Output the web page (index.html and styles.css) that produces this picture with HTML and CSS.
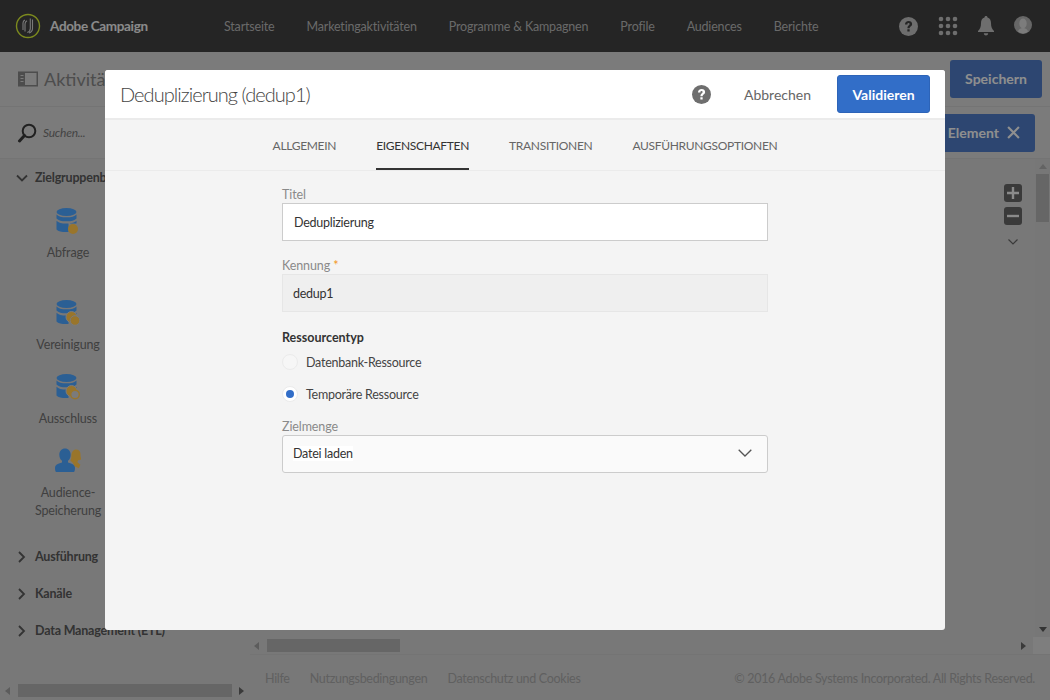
FILE: index.html
```html
<!DOCTYPE html>
<html lang="de">
<head>
<meta charset="utf-8">
<title>Deduplizierung</title>
<link rel="stylesheet" href="styles.css">
</head>
<body>
<div class="app">
  <header class="topbar">
    <div class="brand">
      <svg class="brand-logo" width="26" height="26" viewBox="0 0 26 26" fill="none"><circle cx="13" cy="13" r="11.500" stroke="#cfe632" stroke-width="1.400"/><path d="M8 17V10c0-1.500.8-2.500 2-3M10 18.500V11c0-1.500.7-2.500 2-3.200M12.300 19.500c2-.6 3-1.800 3-4V5.500M14 20c2.300-.8 3.500-2.200 3.500-4.500V6.500" stroke="#ccc" stroke-width="1.100"/></svg>
      <span class="brand-name">Adobe Campaign</span>
    </div>
    <nav class="nav">
      <a>Startseite</a><a>Marketingaktivitäten</a><a>Programme &amp; Kampagnen</a><a>Profile</a><a>Audiences</a><a>Berichte</a>
    </nav>
    <div class="top-icons">
      <svg width="19" height="19" viewBox="0 0 20 20"><circle cx="10" cy="10" r="10" fill="#b7b7b7"/><path d="M6.300 7.800c0-2.300 1.600-3.700 3.800-3.700s3.700 1.300 3.700 3.200c0 2.600-2.600 2.500-2.600 4.600H8.900c0-3.100 2.300-3 2.300-4.500 0-.7-.4-1.100-1.100-1.100-.8 0-1.300.5-1.300 1.500zM8.800 12.800h2.400v2.500H8.800z" fill="#3e3e3e"/></svg>
      <svg width="20" height="20" viewBox="0 0 20 20" fill="#b7b7b7"><circle cx="3" cy="3" r="2.300"/><circle cx="10" cy="3" r="2.300"/><circle cx="17" cy="3" r="2.300"/><circle cx="3" cy="10" r="2.300"/><circle cx="10" cy="10" r="2.300"/><circle cx="17" cy="10" r="2.300"/><circle cx="3" cy="17" r="2.300"/><circle cx="10" cy="17" r="2.300"/><circle cx="17" cy="17" r="2.300"/></svg>
      <svg width="16" height="20" viewBox="0 0 16 20" fill="#b7b7b7"><path d="M8 0c1 0 1.500.7 1.500 1.500C12 2.300 13 4.500 13 7c0 4 1 6 3 8v1H0v-1c2-2 3-4 3-8 0-2.500 1-4.700 3.500-5.500C6.500.7 7 0 8 0zM5.800 17.300h4.400C10 18.800 9.200 19.500 8 19.500s-2-.7-2.200-2.200z"/></svg>
      <svg class="avatar" width="18" height="18" viewBox="0 0 18 18"><circle cx="9" cy="9" r="9" fill="#aaa"/><ellipse cx="9" cy="7.500" rx="3.700" ry="5" fill="#cfcfcf"/><path d="M4 15.800c.5-2.600 2.500-3.800 5-3.800s4.500 1.200 5 3.800a9 9 0 0 1-10 0z" fill="#cfcfcf"/></svg>
    </div>
  </header>

  <div class="toolbar">
    <div class="toolbar-title">
      <svg width="20" height="16" viewBox="0 0 20 16" fill="none"><rect x=".75" y="1.250" width="18.500" height="13.500" stroke="#808080" stroke-width="1.500"/><rect x="1" y="1.500" width="6" height="13" fill="#808080"/><path d="M2.500 4.500h3M2.500 7.500h3M2.500 10.500h3" stroke="#cdcdcd"/></svg>
      <span>Aktivitäten</span>
    </div>
    <button class="btn-save">Speichern</button>
  </div>

  <div class="workspace">
    <aside class="sidebar">
      <div class="search">
        <svg width="20" height="20" viewBox="0 0 20 20" fill="none" stroke="#383838"><circle cx="12" cy="8" r="6.300" stroke-width="2"/><path d="M7.500 12.500 2.500 18" stroke-width="3" stroke-linecap="round"/></svg>
        <span>Suchen...</span>
      </div>
      <div class="sidebar-body">
        <div class="cat">
          <svg class="chev" width="12" height="12" viewBox="0 0 12 12" fill="none" stroke="#555" stroke-width="1.800"><path d="M1 3.500 6 8.500 11 3.500"/></svg>
          <span>Zielgruppenbestimmung</span>
        </div>
        <div class="items">
          <div class="item item-tall">
            <svg width="26" height="26" viewBox="0 0 26 26"><use href="#db"/><circle cx="18" cy="21" r="5" fill="#ffc349"/></svg>
            <span>Abfrage</span>
          </div>
          <div class="item">
            <svg width="26" height="26" viewBox="0 0 26 26"><use href="#db"/><circle cx="16.500" cy="17" r="5.500" fill="#ffc349" stroke="#cdcdcd"/><circle cx="20" cy="20.500" r="4.800" fill="#ffc349" stroke="#cdcdcd"/></svg>
            <span>Vereinigung</span>
          </div>
          <div class="item">
            <svg width="26" height="26" viewBox="0 0 26 26"><use href="#db"/><circle cx="16.500" cy="17" r="5.500" fill="#ffc349" stroke="#cdcdcd"/><circle cx="20" cy="20.500" r="4.300" fill="#cdcdcd" stroke="#ffc349" stroke-width="1.400"/></svg>
            <span>Ausschluss</span>
          </div>
          <div class="item">
            <svg width="26" height="26" viewBox="0 0 26 26"><path d="M21 1.500c2.800 0 4.500 2 4.500 4.500 0 2.500.2 4 1 5-1 1-2.300 1.300-3.500 1.200l-.6 2 3 2.500-1.500 3.500c-2-1-3-1.700-4.500-1.500-.7-3-2-5-4-6 .8-1.500 1-3 1-5 0-3.500 2-6.200 4.600-6.200z" fill="#ffc349"/><path d="M10 .5c3.300 0 5.700 2.600 5.700 6.300 0 2.600-1 4.800-2.700 6v1.700c4.500 1.200 7 2.400 7 5.500 0 2.200-.5 3.500-1 4H1c-.5-.5-1-1.800-1-4 0-3.100 2.500-4.300 7-5.500v-1.700C5.300 11.600 4.300 9.400 4.300 6.800 4.300 3.100 6.700.5 10 .5z" fill="#499ef7"/></svg>
            <span>Audience-<br>Speicherung</span>
          </div>
        </div>
        <div class="cat">
          <svg class="chev" width="12" height="12" viewBox="0 0 12 12" fill="none" stroke="#555" stroke-width="1.800"><path d="M3 1 8 6 3 11"/></svg>
          <span>Ausführung</span>
        </div>
        <div class="cat">
          <svg class="chev" width="12" height="12" viewBox="0 0 12 12" fill="none" stroke="#555" stroke-width="1.800"><path d="M3 1 8 6 3 11"/></svg>
          <span>Kanäle</span>
        </div>
        <div class="cat">
          <svg class="chev" width="12" height="12" viewBox="0 0 12 12" fill="none" stroke="#555" stroke-width="1.800"><path d="M3 1 8 6 3 11"/></svg>
          <span>Data Management (ETL)</span>
        </div>
      </div>
      <div class="hscroll hscroll-side">
        <i class="arrow arrow-left"></i>
        <div class="thumb thumb-side"></div>
        <i class="arrow arrow-right"></i>
      </div>
    </aside>

    <main class="main">
      <div class="main-bar">
        <button class="btn-element">Element <svg width="13" height="13" viewBox="0 0 12 12" stroke="#eee" stroke-width="2"><path d="M1 1 11 11M11 1 1 11"/></svg></button>
      </div>
      <div class="canvas-row">
        <div class="canvas">
          <div class="zoom">
            <span class="zoom-btn"><svg width="12" height="12" viewBox="0 0 12 12" stroke="#e6e6e6" stroke-width="2.400"><path d="M6 0v12M0 6h12"/></svg></span>
            <span class="zoom-btn"><svg width="12" height="12" viewBox="0 0 12 12" stroke="#e6e6e6" stroke-width="2.400"><path d="M0 6h12"/></svg></span>
            <svg class="zoom-chev" width="10" height="6" viewBox="0 0 10 6" fill="none" stroke="#616161" stroke-width="1.200"><path d="M.5.500 5 5 9.500.5"/></svg>
          </div>
        </div>
        <div class="vscroll">
          <i class="arrow arrow-up"></i>
          <div class="thumb thumb-v"></div>
          <i class="arrow arrow-down"></i>
        </div>
      </div>
      <div class="hscroll hscroll-main">
        <i class="arrow arrow-left"></i>
        <div class="thumb thumb-main"></div>
        <i class="arrow arrow-right arrow-end"></i>
        <div class="corner"></div>
      </div>
      <footer class="footer">
        <a>Hilfe</a><a>Nutzungsbedingungen</a><a>Datenschutz und Cookies</a>
        <span class="copy">© 2016 Adobe Systems Incorporated. All Rights Reserved.</span>
      </footer>
    </main>
  </div>
</div>

<svg class="defs" width="0" height="0"><defs><g id="db" fill="#499ef7"><ellipse cx="11.500" cy="4" rx="10" ry="4"/><path d="M1.500 6.500c2 2 5 2.800 10 2.800s8-.8 10-2.800v4c-2 2-5 2.800-10 2.800s-8-.8-10-2.800zM1.500 12.700c2 2 5 2.800 10 2.800 1 0 1.500 0 2-.1V24c-6 .3-10-.5-12-2.500z"/><path d="M15 15.200c3-.3 5-1 6.500-2.500v2.800h-6.500z"/></g></defs></svg>

<div class="overlay"></div>

<section class="modal">
  <div class="modal-head">
    <h1>Deduplizierung (dedup1)</h1>
    <svg class="modal-help" width="19" height="19" viewBox="0 0 20 20"><circle cx="10" cy="10" r="10" fill="#6e6e6e"/><path d="M6.300 7.800c0-2.300 1.600-3.700 3.800-3.700s3.700 1.300 3.700 3.200c0 2.600-2.600 2.500-2.600 4.600H8.900c0-3.100 2.300-3 2.300-4.500 0-.7-.4-1.100-1.100-1.100-.8 0-1.300.5-1.300 1.500zM8.800 12.800h2.400v2.500H8.800z" fill="#fff"/></svg>
    <button class="btn-cancel">Abbrechen</button>
    <button class="btn-validate">Validieren</button>
  </div>
  <div class="tabs">
    <a>ALLGEMEIN</a><a class="tab-active">EIGENSCHAFTEN</a><a>TRANSITIONEN</a><a>AUSFÜHRUNGSOPTIONEN</a>
  </div>
  <form class="form">
    <label class="lbl">Titel</label>
    <div class="input">Deduplizierung</div>
    <label class="lbl lbl-second">Kennung <em>*</em></label>
    <div class="input input-ro">dedup1</div>
    <div class="group-title">Ressourcentyp</div>
    <div class="radio"><i class="dot"></i>Datenbank-Ressource</div>
    <div class="radio"><i class="dot dot-on"></i>Temporäre Ressource</div>
    <label class="lbl lbl-third">Zielmenge</label>
    <div class="select"><span>Datei laden</span>
      <svg width="14" height="8" viewBox="0 0 14 8" fill="none" stroke="#555" stroke-width="1.300"><path d="M.7.700 7 7 13.300.7"/></svg>
    </div>
  </form>
</section>
</body>
</html>
```
FILE: styles.css
```css
* { box-sizing: border-box; }
html, body { margin: 0; height: 100%; overflow: hidden; }
body { font-family: "Lato", "Noto Sans", sans-serif; font-size: 12.5px; letter-spacing: -.25px; color: #333; background: #cdcdcd; }
button { font-family: inherit; border: 0; letter-spacing: inherit; }
.defs { position: absolute; }

.app { display: flex; flex-direction: column; height: 700px; width: 1050px; }

.topbar { height: 52px; flex: none; background: #3e3e3e; display: flex; align-items: center; }
.brand { display: flex; align-items: center; width: 224px; padding-left: 15px; flex: none; }
.brand-logo { margin-right: 9px; }
.brand-name { font-size: 13.5px; font-weight: 700; color: #e6e6e6; letter-spacing: -.35px; }
.nav { display: flex; gap: 32px; flex: 1; }
.nav a { color: #b0b0b0; letter-spacing: -.18px; }
.top-icons { display: flex; align-items: center; gap: 20px; padding-right: 18px; }
.avatar { margin-top: -2px; }

.toolbar { height: 55px; flex: none; background: #cdcdcd; border-bottom: 1px solid #c2c2c2; display: flex; align-items: center; justify-content: space-between; padding: 0 8px 1px 18px; }
.toolbar-title { display: flex; align-items: center; gap: 6px; font-size: 18px; letter-spacing: 0; color: #808080; }
.btn-save { width: 92px; height: 38px; background: #4b76bc; color: #eee; font-size: 14px; font-weight: 700; border-radius: 3px; letter-spacing: 0; }

.workspace { flex: 1; display: flex; min-height: 0; }

.sidebar { width: 250px; flex: none; display: flex; flex-direction: column; background: #c8c8c8; }
.search { height: 52px; flex: none; display: flex; align-items: center; gap: 6px; padding: 0 0 0 17px; border-bottom: 1px solid #c2c2c2; background: #cdcdcd; color: #717171; font-style: italic; font-size: 12px; }
.sidebar-body { flex: 1; min-height: 0; }
.cat { height: 37px; display: flex; align-items: center; gap: 7px; padding-left: 16px; font-weight: 700; letter-spacing: -.2px; color: #555; }
.items { display: flex; flex-direction: column; width: 136px; margin: 12px 0 14px; }
.item { height: 74px; display: flex; flex-direction: column; align-items: center; color: #6b6b6b; line-height: 18px; letter-spacing: -.15px; text-align: center; }
.item svg { margin-bottom: 10px; }
.item-tall { height: 92px; }
.item:last-child { height: 76px; }

.hscroll { height: 17px; flex: none; display: flex; align-items: center; position: relative; }
.hscroll-side { margin-bottom: 1px; padding-left: 5px; }
.hscroll-main { padding-left: 4px; }
.thumb { background: #aaa; }
.thumb-side { width: 214px; height: 13px; margin: 0 7px 0 8px; }
.thumb-main { width: 133px; height: 13px; margin-left: 8px; }
.arrow { display: block; width: 0; height: 0; border: 4px solid transparent; flex: none; }
.arrow-left { border-left: 0; border-right: 5px solid #999; }
.arrow-right { border-right: 0; border-left: 5px solid #616161; }
.arrow-up { border-top: 0; border-bottom: 5px solid #a5a5a5; margin: 5px auto 5px; }
.arrow-down { border-bottom: 0; border-top: 5px solid #555; margin: auto auto 5px; }
.arrow-end { margin-left: auto; margin-right: 7px; }
.corner { width: 17px; height: 17px; background: #d2d2d2; }

.main { flex: 1; min-width: 0; display: flex; flex-direction: column; background: #c8c8c8; }
.main-bar { height: 52px; flex: none; display: flex; align-items: center; justify-content: flex-end; padding-right: 15px; background: #cdcdcd; border-bottom: 1px solid #c2c2c2; }
.btn-element { height: 38px; width: 140px; background: #4b76bc; color: #eee; font-weight: 700; font-size: 14px; letter-spacing: 0; border-radius: 3px; display: flex; align-items: center; justify-content: flex-end; gap: 8px; padding-right: 15px; }
.canvas-row { flex: 1; display: flex; min-height: 0; }
.canvas { flex: 1; position: relative; }
.zoom { position: absolute; top: 25px; right: 13px; display: flex; flex-direction: column; align-items: center; gap: 5px; }
.zoom-btn { width: 18px; height: 18px; border-radius: 3px; background: #616161; display: flex; align-items: center; justify-content: center; }
.zoom-chev { margin-top: 9px; }
.vscroll { width: 15px; flex: none; display: flex; flex-direction: column; background: #c6c6c6; }
.thumb-v { height: 48px; width: 13px; margin: 0 auto; background: #aaa; }
.footer { height: 46px; flex: none; display: flex; align-items: center; gap: 20px; padding: 2px 15px 0; border-top: 1px solid #c2c2c2; background: #c8c8c8; color: #a0a0a0; letter-spacing: -.3px; }
.copy { margin-left: auto; }

.overlay { position: absolute; inset: 0; background: rgba(0, 0, 0, .4); }

.modal { position: absolute; left: 105px; top: 70px; width: 840px; height: 560px; background: #f4f4f4; border-radius: 3px; display: flex; flex-direction: column; }
.modal-head { height: 50px; flex: none; display: flex; align-items: center; background: #fff; border-bottom: 2px solid #ebebeb; padding: 0 15px; border-radius: 3px 3px 0 0; }
.modal-head h1 { margin: 0; flex: 1; font-size: 20px; font-weight: 300; letter-spacing: -.95px; color: #444; }
.modal-help { margin-right: 33px; }
.btn-cancel { background: none; color: #666; font-size: 14px; letter-spacing: 0; padding: 0; margin-right: 26px; }
.btn-validate { width: 93px; height: 38px; background: #326ec8; color: #fff; font-size: 14px; font-weight: 700; letter-spacing: 0; border-radius: 3px; border: 1px solid #2d64b8; }
.tabs { height: 51px; flex: none; display: flex; justify-content: center; gap: 40px; border-bottom: 1px solid #ebebeb; }
.tabs a { display: flex; align-items: center; height: 50px; color: #666; font-size: 12px; letter-spacing: -.31px; border-bottom: 2px solid transparent; padding-top: 2px; }
.tabs .tab-active { color: #333; border-bottom-color: #333; }

.form { width: 486px; margin-left: 177px; padding-top: 15px; display: flex; flex-direction: column; }
.lbl { display: block; color: #8a8a8a; font-size: 12.5px; letter-spacing: -.1px; height: 17px; line-height: 18px; }
.lbl em { color: #f29423; font-style: normal; }
.lbl-second { margin-top: 16px; }
.lbl-third { margin-top: 9px; height: 16px; line-height: 16px; }
.input { height: 38px; border: 1px solid #ccc; background: #fff; padding: 1px 11px 0; line-height: 36px; color: #333; }
.input-ro { background: #efefef; border-color: #e6e6e6; padding-left: 10px; }
.group-title { margin-top: 17px; font-weight: 700; letter-spacing: 0; height: 17px; line-height: 17px; color: #333; }
.radio { height: 32px; display: flex; align-items: center; gap: 8px; color: #444; }
.dot { width: 16px; height: 16px; border-radius: 50%; background: #f6f6f6; border: 1px solid #ebebeb; flex: none; position: relative; }
.dot-on { background: #fff; }
.dot-on::after { content: ""; position: absolute; left: 3px; top: 3px; width: 8px; height: 8px; border-radius: 50%; background: #326ec8; }
.select { height: 38px; border: 1px solid #ccc; border-radius: 3px; background: #fafafa; display: flex; align-items: center; justify-content: space-between; padding: 0 15px 2px 10px; color: #333; }
.select span { background: #fff; }
```
